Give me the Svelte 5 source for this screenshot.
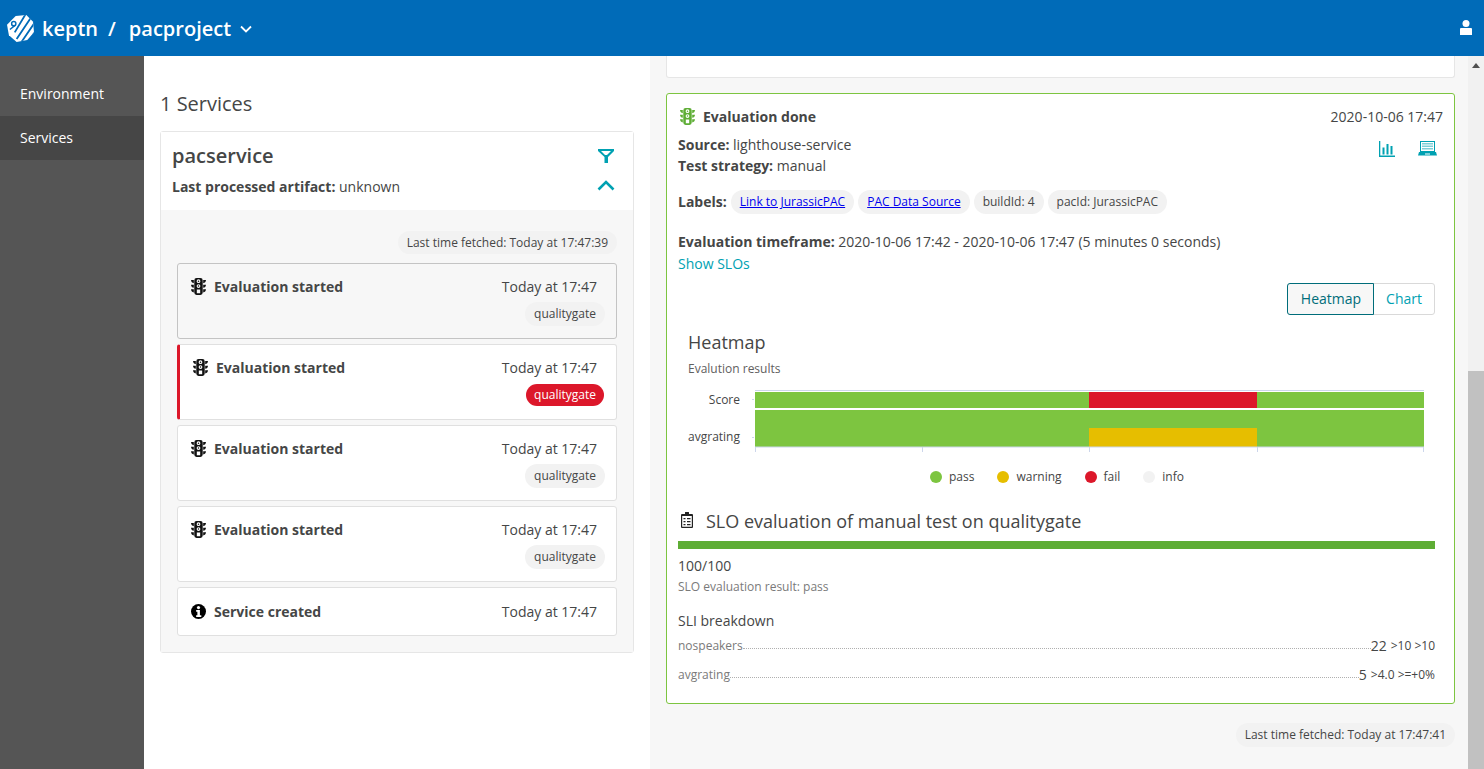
<script>
  const events = [
    { title: 'Evaluation started', icon: 'light', selected: true },
    { title: 'Evaluation started', icon: 'light', failed: true },
    { title: 'Evaluation started', icon: 'light' },
    { title: 'Evaluation started', icon: 'light' },
    { title: 'Service created', icon: 'info', short: true }
  ];
  const lightPath = 'M6 0h4a2.500 2.500 0 0 1 2.500 2.500v13A2.500 2.500 0 0 1 10 18H6a2.500 2.500 0 0 1-2.500-2.500v-13A2.500 2.500 0 0 1 6 0zM8 1.300a2 2 0 1 0 0 4 2 2 0 0 0 0-4zM8 2.500a.8.8 0 1 1 0 1.600.8.8 0 0 1 0-1.600zM8 6.500a2 2 0 1 0 0 4 2 2 0 0 0 0-4zM8 7.700a.8.8 0 1 1 0 1.600.8.8 0 0 1 0-1.600zM6.200 12.300v4h3.600v-4zM0 2h3v3.400C1.200 5.200.2 3.800 0 2zM16 2h-3v3.400C14.800 5.200 15.800 3.800 16 2zM0 7h3v3.400C1.200 10.200.2 8.800 0 7zM16 7h-3v3.400C14.800 10.200 15.800 8.800 16 7zM0 12h3v3.400C1.200 15.200.2 13.800 0 12zM16 12h-3v3.400C14.800 15.200 15.800 13.800 16 12z';
  const labels = [
    { text: 'Link to JurassicPAC', link: true },
    { text: 'PAC Data Source', link: true },
    { text: 'buildId: 4' },
    { text: 'pacId: JurassicPAC' }
  ];
  const legend = [
    { name: 'pass', color: '#7dc540' },
    { name: 'warning', color: '#e6be00' },
    { name: 'fail', color: '#dc172a' },
    { name: 'info', color: '#f2f2f2' }
  ];
  const slis = [
    { name: 'nospeakers', value: '22', rest: '>10 >10' },
    { name: 'avgrating', value: '5', rest: '>4.0 >=+0%' }
  ];
</script>

<div class="page">
  <header class="top">
    <svg class="logo" viewBox="0 0 28 28" aria-hidden="true">
      <defs>
        <clipPath id="oct"><path d="M9 1 20 0l7 7 1 11-7 8-11 2-8-7L0 10z" /></clipPath>
      </defs>
      <g clip-path="url(#oct)">
        <rect width="28" height="28" fill="#fff" />
        <g stroke="#006bb8" stroke-width="1.900">
          <path d="M8 18 20-2M10 25 28-2M15 28 32 3M22 28 34 10" />
        </g>
        <circle cx="7" cy="9" r="2.200" fill="none" stroke="#006bb8" stroke-width="1.500" />
        <path d="M3 15 8 11" stroke="#006bb8" stroke-width="1.500" />
      </g>
    </svg>
    <span class="brand">keptn</span>
    <span class="slash">/</span>
    <span class="project">pacproject</span>
    <svg class="chev" viewBox="0 0 12 8" aria-hidden="true"><path d="M1 1.500 6 6.500l5-5" fill="none" stroke="#fff" stroke-width="1.800" /></svg>
    <svg class="user" viewBox="0 0 12 16" aria-hidden="true">
      <circle cx="6" cy="3.600" r="3.500" fill="#fff" />
      <path d="M1 8h10a1 1 0 0 1 1 1v6H0V9a1 1 0 0 1 1-1z" fill="#fff" />
    </svg>
  </header>

  <div class="body">
    <nav class="side">
      <div class="nav-item">Environment</div>
      <div class="nav-item active">Services</div>
    </nav>

    <section class="left">
      <h1>1 Services</h1>
      <div class="svc">
        <div class="svc-head">
          <div>
            <div class="svc-name">pacservice</div>
            <div class="artifact"><b>Last processed artifact:</b> unknown</div>
          </div>
          <div class="svc-actions">
            <svg class="filter" viewBox="0 0 16 16" aria-hidden="true"><path fill-rule="evenodd" d="M0 1h16v2l-6 6v6H6.500V9L0 3zM3 3l4 4h2l4-4z" fill="#00a1b2" /></svg>
            <svg class="up" viewBox="0 0 18 11" aria-hidden="true"><path d="M1.500 9.500 9 2l7.500 7.500" fill="none" stroke="#00a1b2" stroke-width="2.600" /></svg>
          </div>
        </div>
        <div class="svc-body">
          <div class="pill-row"><span class="pill">Last time fetched: Today at 17:47:39</span></div>
          <div class="events">
            {#each events as e}
              <div class="event" class:selected={e.selected} class:failed={e.failed} class:short={e.short}>
                <div class="event-row">
                  <div class="event-title">
                    {#if e.icon === 'light'}
                      <svg class="ev-icon" viewBox="0 0 16 18" aria-hidden="true"><path fill-rule="evenodd" d={lightPath} fill="#111" /></svg>
                    {:else}
                      <svg class="ev-icon info" viewBox="0 0 16 16" aria-hidden="true">
                        <circle cx="8" cy="8" r="8" fill="#000" />
                        <circle cx="8" cy="3.800" r="1.700" fill="#fff" />
                        <path d="M5.500 6.500h4V12H11v1.800H5.500V12H6.800V8.300H5.500z" fill="#fff" />
                      </svg>
                    {/if}
                    <b>{e.title}</b>
                  </div>
                  <span class="when">Today at 17:47</span>
                </div>
                {#if !e.short}
                  <div class="tag-row"><span class="tag" class:red={e.failed}>qualitygate</span></div>
                {/if}
              </div>
            {/each}
          </div>
        </div>
      </div>
    </section>

    <section class="right">
      <div class="prev-card"></div>
      <div class="eval-card">
        <div class="eval-head">
          <div class="eval-title">
            <svg class="ev-icon green" viewBox="0 0 16 18" aria-hidden="true"><path fill-rule="evenodd" d={lightPath} fill="#5ead35" /></svg>
            <b>Evaluation done</b>
          </div>
          <span class="date">2020-10-06 17:47</span>
        </div>
        <div class="meta">
          <div>
            <div class="line"><b>Source:</b> lighthouse-service</div>
            <div class="line"><b>Test strategy:</b> manual</div>
          </div>
          <div class="meta-icons">
            <svg class="m-icon" viewBox="0 0 16 16" aria-hidden="true">
              <path d="M0 0h1.300v14.500H16V16H0zM3.500 6.500h2v7h-2zM7.500 3h2v10.500h-2zM11.500 5h2v8.500h-2z" fill="#00a1b2" />
            </svg>
            <svg class="m-icon wide" viewBox="0 0 19 15" aria-hidden="true">
              <path fill-rule="evenodd" d="M2 0h15v11H2zM3 1v9h13V1z" fill="#00a1b2" />
              <path d="M4 2h11v1.500H4zM4 4.500h11V6H4zM4 7h11v1.500H4z" fill="#7fd0d8" />
              <path d="M1 11h17l1 3.500H0zM7 12.500v1h5v-1z" fill="#00a1b2" />
            </svg>
          </div>
        </div>
        <div class="labels">
          <b>Labels:</b>
          {#each labels as l}
            <span class="chip">{#if l.link}<a href="#top">{l.text}</a>{:else}{l.text}{/if}</span>
          {/each}
        </div>
        <div class="line timeframe"><b>Evaluation timeframe:</b> 2020-10-06 17:42 - 2020-10-06 17:47 (5 minutes 0 seconds)</div>
        <div class="show">Show SLOs</div>
        <div class="switch-row">
          <div class="switch">
            <span class="sw on">Heatmap</span><span class="sw">Chart</span>
          </div>
        </div>

        <div class="chart">
          <div class="chart-title">Heatmap</div>
          <div class="chart-sub">Evalution results</div>
          <div class="plot-row">
            <div class="ylabels"><span class="y1">Score</span><span class="y2">avgrating</span></div>
            <svg class="plot" viewBox="0 0 674 62" aria-hidden="true">
              <rect x="3" y="0" width="669" height="1" fill="#ccd6eb" />
              <rect x="3" y="2" width="669" height="16" fill="#7dc540" />
              <rect x="337" y="2" width="168" height="16" fill="#dc172a" />
              <rect x="3" y="20" width="669" height="37" fill="#7dc540" />
              <rect x="337" y="38" width="168" height="19" fill="#e6be00" />
              <rect x="0" y="9" width="2" height="1" fill="#ccd6eb" />
              <rect x="0" y="47" width="2" height="1" fill="#ccd6eb" />
              <path d="M3 57h669M3.500 57v5M170.500 57v5M337.500 57v5M505.500 57v5M671.500 57v5" stroke="#ccd6eb" fill="none" />
            </svg>
          </div>
          <div class="legend">
            {#each legend as item}
              <span class="leg"><i style="background:{item.color}"></i>{item.name}</span>
            {/each}
          </div>
        </div>

        <div class="slo-title">
          <svg class="clip" viewBox="0 0 12 16" aria-hidden="true">
            <path fill-rule="evenodd" d="M1 2h3V1a2 2 0 0 1 4 0v1h3a1 1 0 0 1 1 1v12a1 1 0 0 1-1 1H1a1 1 0 0 1-1-1V3a1 1 0 0 1 1-1zM1.200 4v10.800h9.600V4z" fill="#222" />
            <path d="M2.500 6h2v1.200h-2zM6 6h3.500v1.200H6zM2.500 9h2v1.200h-2zM6 9h3.500v1.200H6zM2.500 12h2v1.200h-2zM6 12h3.500v1.200H6z" fill="#222" />
          </svg>
          <span>SLO evaluation of manual test on qualitygate</span>
        </div>
        <div class="bar"></div>
        <div class="score">100/100</div>
        <div class="result">SLO evaluation result: pass</div>
        <div class="sli-title">SLI breakdown</div>
        {#each slis as s}
          <div class="sli">
            <span class="sli-name">{s.name}</span>
            <span class="dots"></span>
            <span class="sli-val">{s.value}</span>
            <span class="sli-rest">{s.rest}</span>
          </div>
        {/each}
      </div>
      <div class="pill-row foot"><span class="pill">Last time fetched: Today at 17:47:41</span></div>
    </section>

    <div class="scrollbar">
      <svg class="arrow" viewBox="0 0 8 5" aria-hidden="true"><path d="M4 0 8 5H0z" fill="#505050" /></svg>
      <div class="thumb"></div>
    </div>
  </div>
</div>

<style>
  :global(body) {
    margin: 0;
    font-family: "Open Sans", "Noto Sans", sans-serif;
    color: #454646;
    overflow: hidden;
  }
  .page {
    width: 1484px;
    height: 769px;
    display: flex;
    flex-direction: column;
    overflow: hidden;
  }
  .top {
    height: 56px;
    flex: none;
    background: #006bb8;
    color: #fff;
    display: flex;
    align-items: center;
    padding: 0 12px 0 7px;
    font-size: 20px;
    font-weight: 600;
  }
  .logo { width: 27px; height: 27px; margin-right: 8px; }
  .slash { margin: 0 13px 0 10px; }
  .chev { width: 12px; height: 8px; margin-left: 9px; margin-top: 1px; }
  .user { width: 12px; height: 16px; margin-left: auto; }
  .body { flex: 1; display: flex; min-height: 0; }

  .side { width: 144px; flex: none; background: #555; padding-top: 16px; color: #fff; font-size: 14px; }
  .nav-item { height: 44px; line-height: 44px; padding-left: 20px; }
  .nav-item.active { background: #464646; }

  .left { width: 506px; flex: none; padding: 35px 16px 0; box-sizing: border-box; background: #fff; }
  h1 { margin: 0 0 15px; font-size: 20px; font-weight: 400; line-height: 25px; color: #454646; }
  .svc { border: 1px solid #e6e6e6; border-radius: 3px; }
  .svc-head { height: 78px; padding: 10px 18px 0 11px; box-sizing: border-box; display: flex; justify-content: space-between; background: #fff; }
  .svc-name { font-size: 20px; font-weight: 600; line-height: 27px; }
  .artifact { font-size: 14px; line-height: 19px; margin-top: 8px; }
  .artifact b { font-weight: 700; }
  .svc-actions { display: flex; flex-direction: column; align-items: center; gap: 16px; padding-top: 6px; }
  .filter { width: 16px; height: 16px; }
  .up { width: 18px; height: 11px; }
  .svc-body { background: #f7f7f7; padding: 21px 16px 16px; height: 442px; box-sizing: border-box; }
  .pill-row { display: flex; justify-content: flex-end; }
  .pill { background: #f2f2f2; border-radius: 12px; font-size: 12px; line-height: 24px; height: 24px; padding: 0 9px; }
  .svc-body .pill { height: 23px; line-height: 23px; }
  .events { display: flex; flex-direction: column; gap: 5px; margin-top: 9px; }
  .event {
    height: 76px;
    box-sizing: border-box;
    background: #fff;
    border: 1px solid #e0e0e0;
    border-radius: 3px;
    padding: 13px 19px 0 13px;
  }
  .event.selected { background: #f7f7f7; border-color: #c4c4c4; }
  .event.failed { border-left: 3px solid #dc172a; }
  .event.short { height: 49px; padding-top: 14px; }
  .event-row { display: flex; justify-content: space-between; align-items: center; font-size: 14px; line-height: 19px; }
  .event-title { display: flex; align-items: center; gap: 8px; }
  .event-title b { font-weight: 700; }
  .ev-icon { width: 15px; height: 17px; flex: none; }
  .ev-icon.info { height: 15px; }
  .tag-row { display: flex; justify-content: flex-end; margin: 6px -8px 0 0; }
  .tag { background: #f2f2f2; border-radius: 12px; font-size: 12px; line-height: 24px; padding: 0 9px; height: 24px; }
  .tag.red { background: #dc172a; color: #fff; height: 22px; line-height: 22px; padding: 0 8px; margin: 1px 1px 0; }

  .right { flex: 1; min-width: 0; background: #f7f7f7; padding: 0 13px 0 16px; }
  .prev-card { height: 22px; background: #fff; border: 1px solid #e6e6e6; border-top: 0; border-radius: 0 0 3px 3px; box-sizing: border-box; }
  .eval-card {
    margin-top: 15px;
    height: 611px;
    box-sizing: border-box;
    background: #fff;
    border: 1px solid #7dc540;
    border-radius: 3px;
    padding: 13px 19px 0 11px;
    font-size: 14px;
  }
  .eval-head { display: flex; justify-content: space-between; align-items: center; line-height: 19px; height: 19px; margin-right: -8px; }
  .eval-title { display: flex; align-items: center; gap: 8px; padding-left: 2px; }
  .eval-title b { font-weight: 700; }
  .meta { display: flex; justify-content: space-between; margin-top: 8px; }
  .line { line-height: 21px; }
  .line b { font-weight: 700; }
  .meta-icons { display: flex; gap: 23px; padding-top: 7px; margin-right: -2px; align-items: flex-start; }
  .m-icon { width: 16px; height: 16px; }
  .m-icon.wide { width: 19px; height: 15px; }
  .labels { display: flex; align-items: center; gap: 4px; margin-top: 14px; height: 24px; }
  .labels b { margin: 0 0 2px; }
  .chip { background: #f2f2f2; border-radius: 12px; font-size: 12px; line-height: 24px; height: 24px; padding: 0 9px; }
  .chip a { color: #0000ee; }
  .timeframe { margin-top: 17px; line-height: 22px; }
  .show { color: #00a1b2; line-height: 22px; }
  .switch-row { display: flex; justify-content: flex-end; margin-top: 8px; }
  .switch { display: flex; border: 1px solid #d9d9d9; border-radius: 3px; height: 32px; box-sizing: border-box; line-height: 30px; color: #00a1b2; position: relative; }
  .sw { padding: 0 12px; }
  .sw.on { color: #006d7a; background: #f7f7f7; border: 1px solid #006d7a; border-radius: 3px 0 0 3px; margin: -1px 0 -1px -1px; line-height: 30px; padding: 0 12px 0 13px; }

  .chart { padding-top: 15px; }
  .chart-title { font-size: 18px; line-height: 24px; margin-left: 10px; }
  .chart-sub { font-size: 12px; line-height: 16px; margin: 7px 0 0 10px; color: #5f6060; }
  .plot-row { display: flex; margin-top: 13px; padding-left: 10px; }
  .ylabels { width: 52px; height: 60px; position: relative; font-size: 12px; flex: none; text-align: right; }
  .ylabels span { position: absolute; right: 0; line-height: 16px; }
  .y1 { top: 2px; }
  .y2 { top: 39px; }
  .plot { width: 674px; height: 62px; margin-left: 12px; flex: none; display: block; }
  .legend { display: flex; justify-content: center; gap: 23px; margin-top: 17px; font-size: 12px; line-height: 16px; padding-left: 1px; }
  .leg { display: flex; align-items: center; gap: 7px; }
  .leg i { width: 12px; height: 12px; border-radius: 50%; display: block; }

  .slo-title { display: flex; align-items: center; gap: 13px; margin-top: 24px; font-size: 18px; line-height: 24px; padding-left: 3px; }
  .clip { width: 12px; height: 16px; margin-top: -2px; }
  .bar { height: 8px; background: #5ead35; margin-top: 8px; }
  .score { margin-top: 7px; line-height: 19px; }
  .result { font-size: 12px; line-height: 16px; margin-top: 4px; color: #7a7a7a; }
  .sli-title { margin-top: 16px; line-height: 19px; }
  .sli { display: flex; align-items: flex-end; margin-top: 8px; height: 19px; line-height: 19px; font-size: 14px; }
  .sli + .sli { margin-top: 10px; }
  .sli-title + .sli { margin-top: 6px; }
  .sli-name { font-size: 12px; color: #7a7a7a; }
  .dots { flex: 1; border-bottom: 1px dotted #b0b0b0; margin-bottom: 6px; }
  .sli-rest { font-size: 12px; margin-left: 4px; }
  .foot { margin-top: 19px; }

  .scrollbar { width: 16px; flex: none; background: #f1f1f1; position: relative; }
  .arrow { width: 8px; height: 5px; display: block; margin: 7px 0 0 4px; }
  .thumb { position: absolute; left: 0; right: 0; top: 315px; bottom: 0; background: #c1c1c1; }
</style>
